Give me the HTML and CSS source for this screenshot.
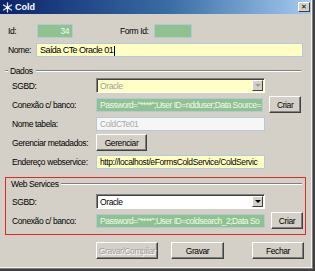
FILE: index.html
```html
<!DOCTYPE html>
<html>
<head>
    <meta charset="UTF-8">
    <title>Cold</title>
    <link rel="stylesheet" href="styles.css">
</head>
<body>
    <div class="window">
        <div class="titlebar">
            <svg class="app-icon" width="11" height="11" viewBox="0 0 11 11">
                <g stroke="#dce8f8" stroke-width="1.3" stroke-linecap="round">
                    <line x1="5.5" y1="1" x2="5.5" y2="10"/>
                    <line x1="1.5" y1="3" x2="9.5" y2="8"/>
                    <line x1="1.5" y1="8" x2="9.5" y2="3"/>
                </g>
                <circle cx="5.5" cy="5.5" r="1.6" fill="#ffffff"/>
            </svg>
            <span class="title">Cold</span>
            <div class="close">&#10005;</div>
        </div>

        <div class="content">
            <div class="row row-top">
                <span class="lbl lbl-short">Id:</span>
                <div class="field green field-id">34</div>
                <span class="lbl lbl-form">Form Id:</span>
                <div class="field green field-form"></div>
            </div>
            <div class="row row-top">
                <span class="lbl lbl-short">Nome:</span>
                <div class="field yellow field-nome">Saída CTe Oracle 01<span class="caret"></span></div>
            </div>

            <div class="group group-dados">
                <div class="legend"><span>Dados</span></div>
                <div class="row">
                    <span class="lbl">SGBD:</span>
                    <div class="combo yellow disabled">
                        <span class="combo-text">Oracle</span>
                        <span class="combo-btn"><i class="arrow"></i></span>
                    </div>
                </div>
                <div class="row">
                    <span class="lbl">Conexão c/ banco:</span>
                    <div class="field green field-main">Password="****";User ID=ndduser;Data Source=</div>
                    <button class="btn btn-small">Criar</button>
                </div>
                <div class="row">
                    <span class="lbl">Nome tabela:</span>
                    <div class="field plain field-main">ColdCTe01</div>
                </div>
                <div class="row row-btn">
                    <span class="lbl">Gerenciar metadados:</span>
                    <button class="btn btn-manage">Gerenciar</button>
                </div>
                <div class="row">
                    <span class="lbl">Endereço webservice:</span>
                    <div class="field yellow field-main dark">http://localhost/eFormsColdService/ColdServic</div>
                </div>
            </div>

            <div class="highlight">
                <div class="group group-ws">
                    <div class="legend"><span>Web Services</span></div>
                    <div class="row">
                        <span class="lbl">SGBD:</span>
                        <div class="combo white">
                            <span class="combo-text">Oracle</span>
                            <span class="combo-btn"><i class="arrow"></i></span>
                        </div>
                    </div>
                    <div class="row">
                        <span class="lbl">Conexão c/ banco:</span>
                        <div class="field green field-main">Password="****";User ID=coldsearch_2;Data So</div>
                        <button class="btn btn-small">Criar</button>
                    </div>
                </div>
            </div>

            <div class="actions">
                <button class="btn btn-compile" disabled>Gravar/Compilar</button>
                <button class="btn btn-save">Gravar</button>
                <button class="btn btn-close">Fechar</button>
            </div>
        </div>
    </div>
</body>
</html>
```

FILE: styles.css
```css
body {
    margin: 0;
    padding: 0;
    font-family: "Liberation Sans", Arial, sans-serif;
    font-size: 8.5px;
    letter-spacing: -0.4px;
    color: #000;
    background-color: #d4d0c8;
}

.window {
    width: 315px;
    height: 271px;
    box-sizing: border-box;
    background-color: #d4d0c8;
    border-right: 2px solid #404040;
    border-bottom: 2px solid #404040;
    box-shadow: inset -1px -1px 0 #808080, inset -2px -2px 0 #f4f3ef;
    overflow: hidden;
}

.titlebar {
    height: 14px;
    margin-right: 2px;
    display: flex;
    align-items: center;
    background-image: linear-gradient(to right, #0a246a, #3a6ea5 55%, #a6caf0);
    color: #fff;
}

.app-icon {
    margin-left: 2px;
    margin-right: 2px;
}

.title {
    font-weight: bold;
    font-size: 9px;
    letter-spacing: 0;
}

.close {
    margin-left: auto;
    margin-right: 1px;
    width: 12px;
    height: 10px;
    box-sizing: border-box;
    background-color: #d4d0c8;
    border-top: 1px solid #fff;
    border-left: 1px solid #fff;
    border-right: 1px solid #404040;
    border-bottom: 1px solid #404040;
    color: #000;
    font-size: 7px;
    font-weight: bold;
    line-height: 8px;
    letter-spacing: 0;
    text-align: center;
    font-family: "DejaVu Sans", sans-serif;
}

.content {
    padding: 10px 0 0 0;
}

.row {
    display: flex;
    align-items: center;
    height: 15px;
    margin-bottom: 4px;
    padding-left: 12px;
}

.row-top {
    padding-left: 8px;
    height: 14px;
    margin-bottom: 5px;
}

.row-btn {
    height: 17px;
    margin-top: -1px;
    margin-bottom: 3px;
}

.lbl {
    width: 84px;
    flex-shrink: 0;
    white-space: nowrap;
}

.lbl-short {
    width: 28px;
}

.lbl-form {
    width: 34px;
    margin-left: 47px;
}

.field {
    height: 14px;
    box-sizing: border-box;
    border: 1px solid #b4c8dc;
    padding: 0 3px;
    line-height: 12px;
    white-space: nowrap;
    overflow: hidden;
}

.green {
    background-color: #8fc28f;
    color: #f2f8f2;
    letter-spacing: -0.5px;
}

.yellow {
    background-color: #ffffc4;
}

.plain {
    background-color: #f6f6f4;
    color: #a8a8a8;
}

.white {
    background-color: #fff;
}

.field-id {
    width: 36px;
    margin-left: 1px;
    text-align: right;
}

.field-form {
    width: 38px;
}

.field-nome {
    width: 267px;
    font-size: 9px;
    letter-spacing: -0.55px;
}

.caret {
    display: inline-block;
    width: 1px;
    height: 10px;
    background-color: #000;
    vertical-align: middle;
    margin-left: 1px;
}

.field-main {
    width: 169px;
}

.dark {
    color: #000;
}

.combo {
    width: 169px;
    height: 15px;
    box-sizing: border-box;
    border-top: 1px solid #808080;
    border-left: 1px solid #808080;
    border-right: 1px solid #fff;
    border-bottom: 1px solid #fff;
    box-shadow: inset 1px 1px 0 #404040;
    display: flex;
    align-items: center;
}

.combo-text {
    flex: 1;
    padding-left: 3px;
}

.disabled .combo-text {
    color: #a0a0a0;
}

.combo-btn {
    width: 11px;
    height: 11px;
    margin-right: 1px;
    box-sizing: border-box;
    background-color: #d4d0c8;
    border-top: 1px solid #fff;
    border-left: 1px solid #fff;
    border-right: 1px solid #404040;
    border-bottom: 1px solid #404040;
    display: flex;
    align-items: center;
    justify-content: center;
}

.arrow {
    width: 0;
    height: 0;
    border-left: 3px solid transparent;
    border-right: 3px solid transparent;
    border-top: 3px solid #000;
}

.disabled .arrow {
    border-top-color: #9c9c9c;
}

.btn {
    font-family: inherit;
    font-size: 8.5px;
    letter-spacing: -0.4px;
    background-color: #d4d0c8;
    color: #000;
    height: 17px;
    box-sizing: border-box;
    padding: 0;
    border-top: 1px solid #fff;
    border-left: 1px solid #fff;
    border-right: 1px solid #404040;
    border-bottom: 1px solid #404040;
    box-shadow: inset -1px -1px 0 #808080;
}

.btn-small {
    width: 32px;
    margin-left: 6px;
}

.btn-manage {
    width: 51px;
}

.group {
    margin: 0 12px 0 0;
}

.legend {
    display: flex;
    align-items: center;
    height: 8px;
    margin-bottom: 3px;
    padding-left: 5px;
}

.legend::before {
    content: "";
    width: 3px;
    border-top: 1px solid #808080;
    border-bottom: 1px solid #fff;
}

.legend::after {
    content: "";
    flex: 1;
    border-top: 1px solid #808080;
    border-bottom: 1px solid #fff;
}

.legend span {
    padding: 0 3px 0 2px;
}

.group-dados {
    margin-top: 10px;
}

.highlight {
    margin: 8px 7px 0 5px;
    height: 58px;
    box-sizing: border-box;
    border: 1px solid #e02828;
}

.group-ws {
    margin: 0;
    padding-top: 2px;
}

.group-ws .legend {
    padding-left: 0;
    margin-bottom: 6px;
}

.group-ws .legend::before {
    width: 0;
    border: none;
}

.group-ws .legend span {
    padding-left: 5px;
}

.group-ws .legend::after {
    margin-right: 3px;
}

.group-ws .row {
    padding-left: 6px;
}

.actions {
    display: flex;
    padding-left: 96px;
    margin-top: 7px;
}

.btn-compile {
    width: 62px;
    color: #a0a0a0;
    text-shadow: 1px 1px 0 #fff;
}

.btn-save {
    width: 53px;
    margin-left: 13px;
}

.btn-close {
    width: 52px;
    margin-left: 28px;
}
```
